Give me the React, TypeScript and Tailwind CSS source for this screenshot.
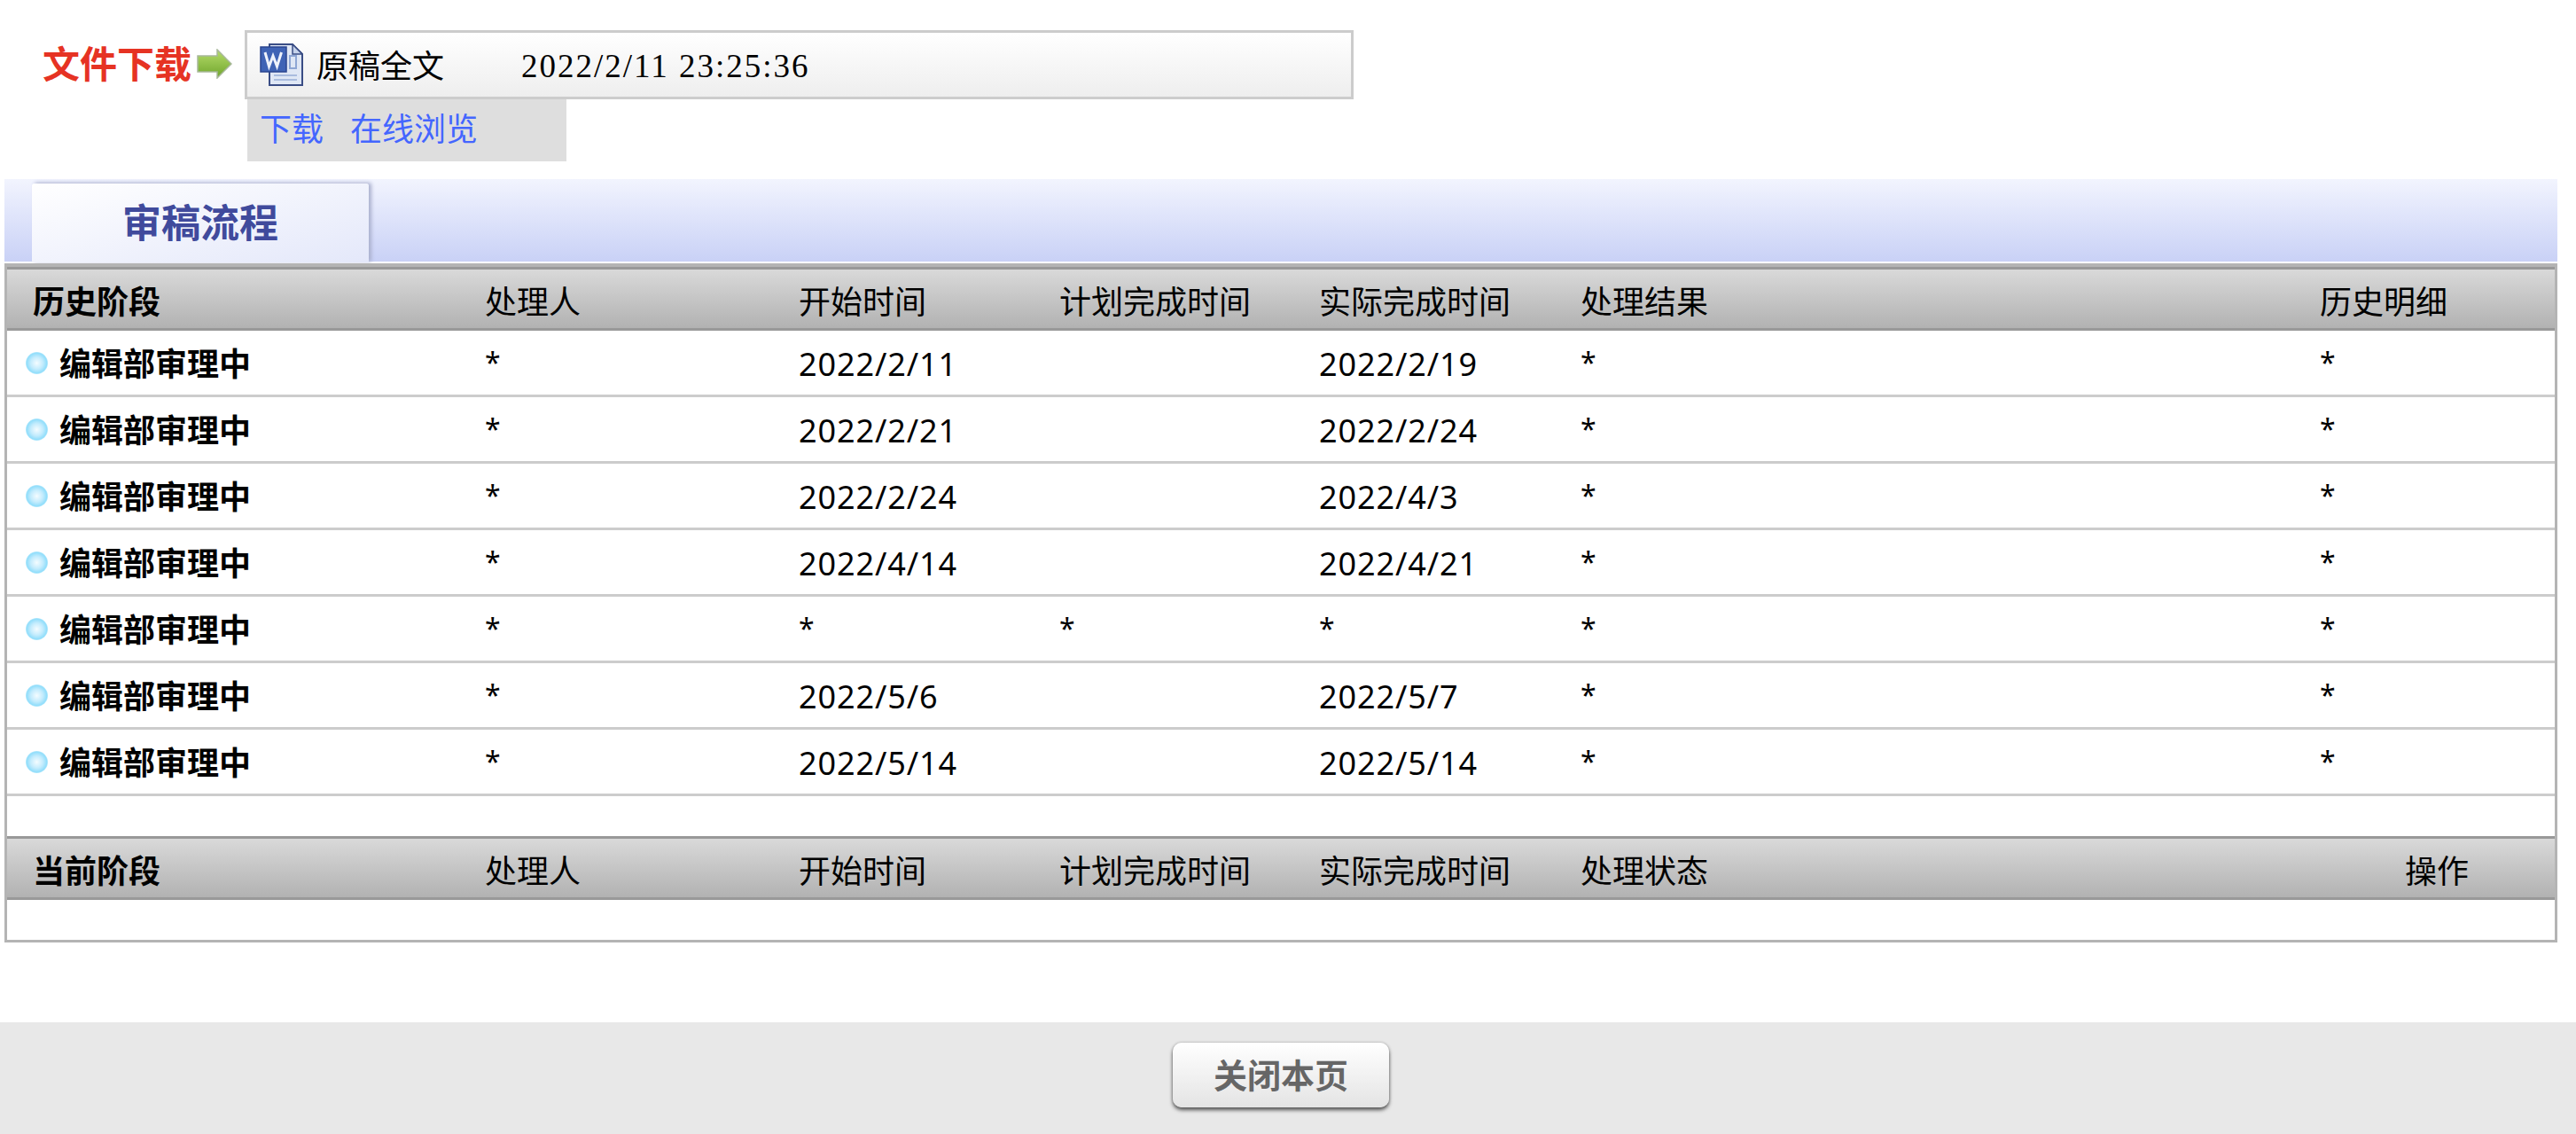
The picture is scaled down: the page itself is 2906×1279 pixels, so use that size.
const sans = 'font-["Noto_Sans","Noto_Sans_CJK_SC",sans-serif]'

const rows = [
  ['2022/2/11', '', '2022/2/19'],
  ['2022/2/21', '', '2022/2/24'],
  ['2022/2/24', '', '2022/4/3'],
  ['2022/4/14', '', '2022/4/21'],
  ['*', '*', '*'],
  ['2022/5/6', '', '2022/5/7'],
  ['2022/5/14', '', '2022/5/14'],
]

const columns = 'grid grid-cols-[539px_354px_294px_293px_295px_834px_1fr] items-center'

function WordIcon() {
  return (
    <svg width="49" height="48" viewBox="0 0 49 48" className="shrink-0 blur-[0.4px]">
      <path d="M11 1h26l11 11v35H11z" fill="#dfe7f5" stroke="#3a4d85" strokeWidth="2" />
      <path d="M37 1v11h11z" fill="#c5d2ea" stroke="#3a4d85" strokeWidth="1.5" />
      <path d="M34 14h7v14h-7z" fill="none" stroke="#8ea6d4" strokeWidth="2" />
      <path d="M16 36h26M16 41h26" stroke="#a9bcdf" strokeWidth="2" />
      <rect x="1" y="4" width="29" height="28" fill="#3f63b5" stroke="#2b4590" strokeWidth="1.5" />
      <path d="M6 10l4.5 16 4.5-12 4.5 12 5-16" fill="none" stroke="#eef2fb" strokeWidth="3" />
    </svg>
  )
}

function GreenArrow() {
  return (
    <svg width="40" height="34" viewBox="0 0 40 34" className="ml-[6px] shrink-0 blur-[0.5px]">
      <defs>
        <linearGradient id="arrowFill" x1="0" y1="0" x2="0" y2="1">
          <stop offset="0" stopColor="#b6dc6a" />
          <stop offset="1" stopColor="#6fa52c" />
        </linearGradient>
      </defs>
      <path d="M1 8h22V1l16 16-16 16v-7H1z" fill="url(#arrowFill)" stroke="#a8b89a" strokeWidth="1.5" />
    </svg>
  )
}

function Bullet() {
  return (
    <svg width="25" height="25" viewBox="0 0 25 25" className="mb-[4px] shrink-0">
      <defs>
        <radialGradient id="bulletFill" cx="0.5" cy="0.5" r="0.5">
          <stop offset="0" stopColor="#f4fcff" />
          <stop offset="0.55" stopColor="#c4ecfd" />
          <stop offset="0.9" stopColor="#92defb" />
          <stop offset="1" stopColor="#b6e9fc" />
        </radialGradient>
      </defs>
      <circle cx="12.5" cy="12.5" r="12.5" fill="url(#bulletFill)" />
    </svg>
  )
}

function Star() {
  return <div className="pb-[5px] text-[32px]">*</div>
}

function HeaderRow({ first, status, last, lastClass }: { first: string; status: string; last: string; lastClass: string }) {
  return (
    <div className={`${columns} h-[72px] border-y-[3px] border-[#999999] bg-linear-to-b from-[#d9d9d9] to-[#b2b2b2] pt-[8px] text-[36px] text-black`}>
      <div className="pl-[29px] font-bold">{first}</div>
      <div>处理人</div>
      <div>开始时间</div>
      <div>计划完成时间</div>
      <div>实际完成时间</div>
      <div>{status}</div>
      <div className={lastClass}>{last}</div>
    </div>
  )
}

export default function App() {
  return (
    <div className={`${sans} relative h-[1279px] w-[2906px] overflow-hidden bg-white`}>
      <div className="flex h-[202px] items-start">
        <div className="flex w-[276px] items-center pl-[48px] pt-[46px]">
          <span className="text-[42px] leading-[52px] font-bold text-[#e63323]">文件下载</span>
          <GreenArrow />
        </div>
        <div className="mt-[34px] w-[1251px]">
          <div className="flex h-[78px] items-center border-[3px] border-[#cccccc] bg-linear-to-b from-white to-[#eeeeee] pl-[14px]">
            <WordIcon />
            <span className="ml-[15px] pt-[4px] text-[36px] text-black">原稿全文</span>
            <span className='ml-[87px] pt-[4px] font-["Liberation_Serif",serif] text-[37px] tracking-[2px] text-black'>2022/2/11 23:25:36</span>
          </div>
          <div className="ml-[3px] flex h-[70px] w-[360px] items-center gap-[30px] bg-[#dedede] pb-[3px] pl-[14px] text-[36px] text-[#4466ff]">
            <span>下载</span>
            <span>在线浏览</span>
          </div>
        </div>
      </div>

      <div className="ml-[5px] h-[93px] w-[2880px] bg-linear-to-b from-[#f2f4fe] to-[#c9d1f6] pl-[31px] pt-[5px]">
        <div className="flex h-[89px] w-[380px] items-center justify-center rounded-t-[3px] bg-linear-to-br from-white to-[#e4e8fa] pb-[2px] text-[44px] font-bold text-[#404a9c] shadow-[3px_-1px_4px_#aab0ce]">
          审稿流程
        </div>
      </div>

      <div className="relative mt-[2px] ml-[5px] w-[2880px] border-[3px] border-t-[4px] border-[#b4b4b4] bg-white">
        <HeaderRow first="历史阶段" status="处理结果" last="历史明细" lastClass="" />
        {rows.map((row, i) => (
          <div key={i} className={`${columns} h-[75px] border-b-[3px] border-[#cccccc] pt-[4px] text-[36px] text-black`}>
            <div className="flex items-center gap-[13px] pl-[21px] font-bold">
              <Bullet />
              <span>编辑部审理中</span>
            </div>
            <Star />
            {row[0] === '*' ? <Star /> : <div className="tracking-[0.9px]">{row[0]}</div>}
            {row[1] === '*' ? <Star /> : <div />}
            {row[2] === '*' ? <Star /> : <div className="tracking-[0.9px]">{row[2]}</div>}
            <Star />
            <Star />
          </div>
        ))}
        <div className="h-[45px]" />
        <HeaderRow first="当前阶段" status="处理状态" last="操作" lastClass="pl-[96px]" />
        <div className="h-[45px]" />
      </div>

      <div className="absolute inset-x-0 bottom-0 flex h-[126px] items-start justify-center bg-[#e8e8e8] pt-[23px]">
        <button className="mr-[16px] h-[73px] w-[244px] rounded-[10px] bg-linear-to-b from-white to-[#e4e4e4] text-[38px] font-bold text-[#666666] shadow-[0_3px_4px_#555555,0_0_3px_#aaaaaa]">
          关闭本页
        </button>
      </div>
    </div>
  )
}
